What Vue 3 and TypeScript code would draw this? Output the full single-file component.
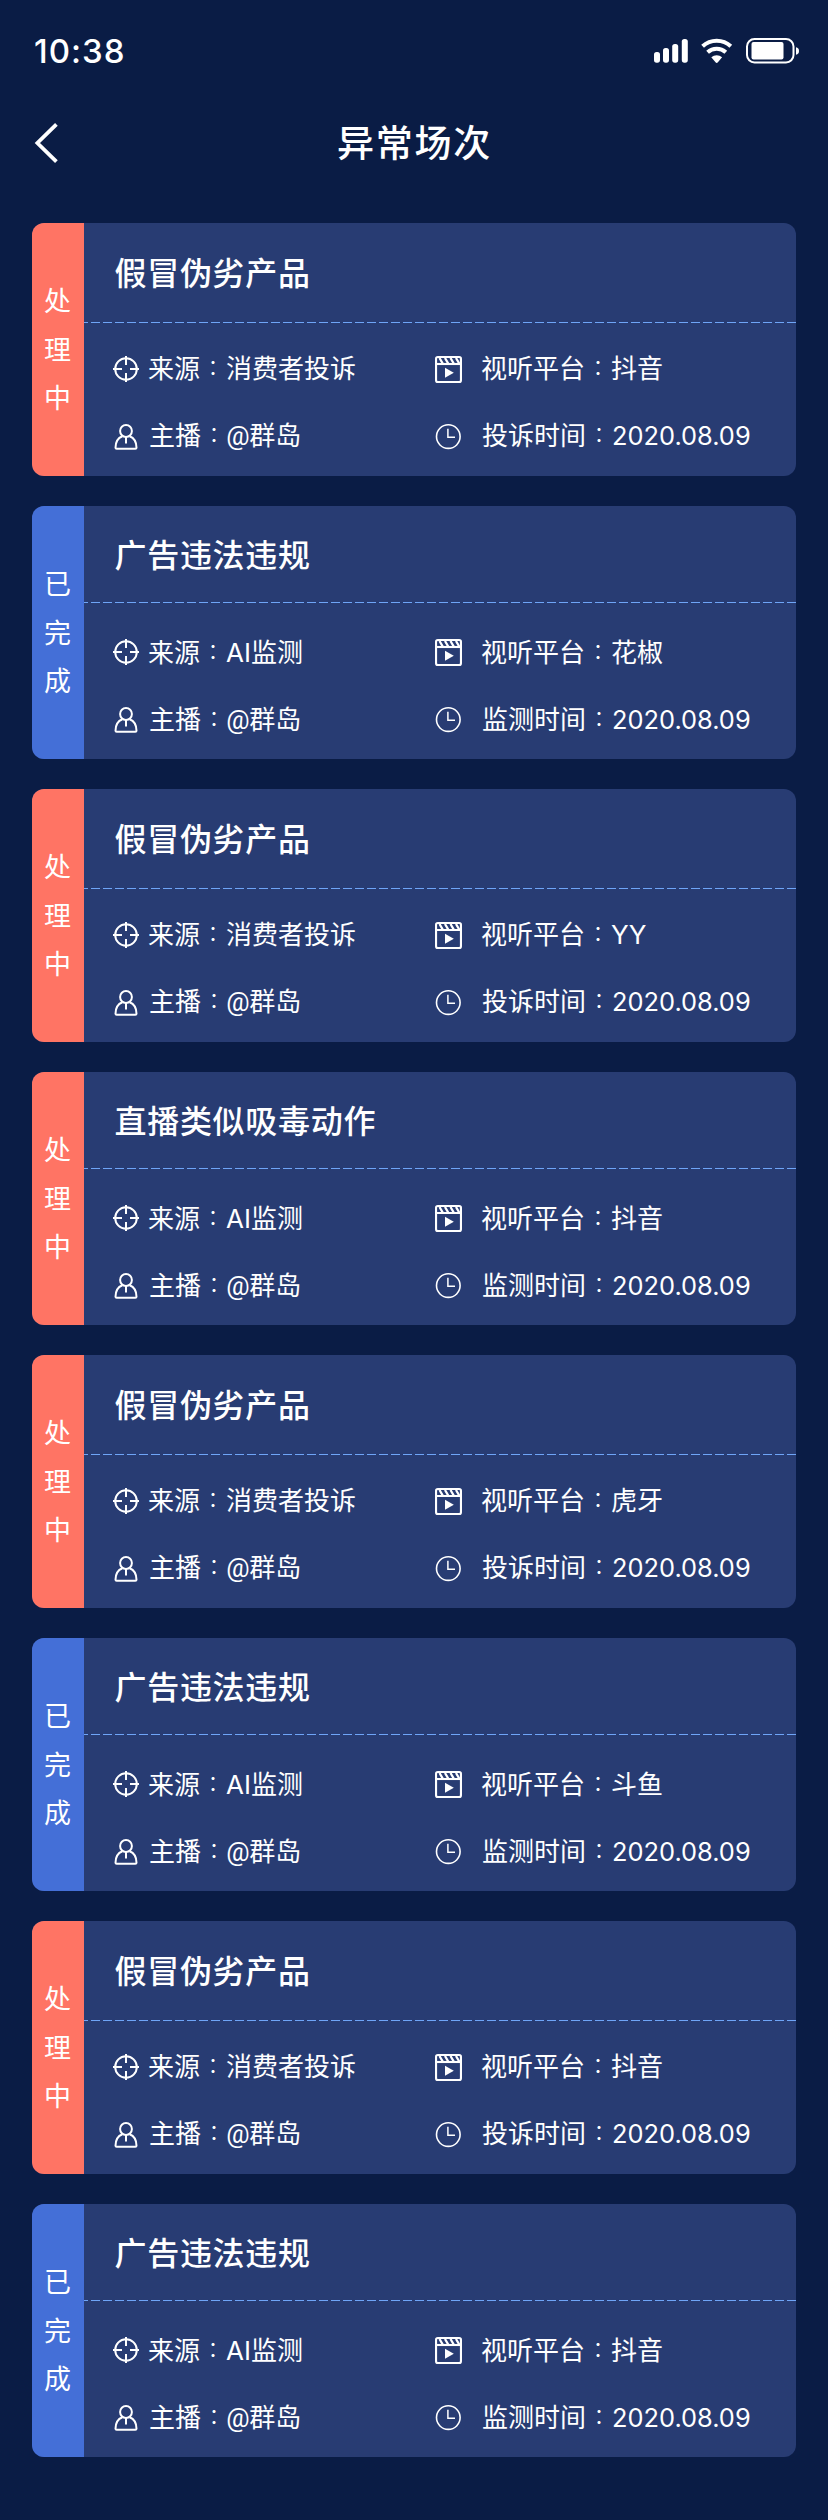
<script setup lang="ts">
type Status = 'processing' | 'done'

interface Session {
  status: Status
  title: string
  source: string
  platform: string
  timeLabel: string
}

const statusText: Record<Status, string[]> = {
  processing: ['处', '理', '中'],
  done: ['已', '完', '成'],
}

const complaint = (platform: string): Session => ({
  status: 'processing',
  title: '假冒伪劣产品',
  source: '消费者投诉',
  platform,
  timeLabel: '投诉时间',
})

const monitored = (status: Status, title: string, platform: string): Session => ({
  status,
  title,
  source: 'AI监测',
  platform,
  timeLabel: '监测时间',
})

const sessions: Session[] = [
  complaint('抖音'),
  monitored('done', '广告违法违规', '花椒'),
  complaint('YY'),
  monitored('processing', '直播类似吸毒动作', '抖音'),
  complaint('虎牙'),
  monitored('done', '广告违法违规', '斗鱼'),
  complaint('抖音'),
  monitored('done', '广告违法违规', '抖音'),
]
</script>

<template>
  <main class="screen">
    <div class="status-bar">
      <span class="clock">10:38</span>
      <svg class="indicators" width="146" height="28" viewBox="0 0 146 28" fill="#fff">
        <rect x="1" y="15" width="6" height="10.7" rx="2.6" />
        <rect x="10" y="11" width="6" height="14.7" rx="2.6" />
        <rect x="19.2" y="7" width="6" height="18.7" rx="2.6" />
        <rect x="28.8" y="2" width="6" height="23.7" rx="2.6" />
        <g fill="none" stroke="#fff" stroke-width="4">
          <path d="M49.6 9.3a20.5 20.5 0 0 1 28.2 0" />
          <path d="M54.6 15.3a13.5 13.5 0 0 1 18.2 0" />
        </g>
        <path d="M58.3 20.3a8.5 8.5 0 0 1 10.8 0l-4.2 4.9q-1.2 1.4-2.4 0z" />
        <rect x="94" y="2" width="46.5" height="23.5" rx="7.5" fill="none" stroke="#fff" stroke-width="2" />
        <rect x="98.5" y="5" width="32" height="17.6" rx="2" />
        <path d="M143 10.3q3 .5 3 3.7t-3 3.7z" />
      </svg>
    </div>

    <header class="nav">
      <svg class="back" width="26" height="42" viewBox="0 0 26 42" fill="none" stroke="#fff" stroke-width="3.8">
        <path d="M22.4 2.3 3.4 21l19 18.7" />
      </svg>
      <h1>异常场次</h1>
    </header>

    <section class="list">
      <article v-for="(s, i) in sessions" :key="i" class="card" :class="{ monitored: s.timeLabel === '监测时间' }">
        <div class="tag" :class="s.status">
          <span v-for="c in statusText[s.status]" :key="c">{{ c }}</span>
        </div>
        <div class="body">
          <h2>{{ s.title }}</h2>
          <svg class="divider" width="712" height="1" viewBox="0 0 712 1">
            <path d="M-5 .5H712" stroke="#6fa5f7" stroke-dasharray="9 3" />
          </svg>
          <div class="grid">
            <div class="item">
              <svg width="26" height="26" viewBox="0 0 26 26" fill="none" stroke="#fff" stroke-width="2">
                <circle cx="13" cy="13" r="10.8" />
                <path d="M13 0v9M13 17v9M0 13h9M17 13h9" />
              </svg>
              <p>来源<i>：</i>{{ s.source }}</p>
            </div>
            <div class="item">
              <svg width="27" height="27" viewBox="0 0 27 27" fill="none" stroke="#fff" stroke-width="2.1">
                <rect x="1.05" y="1.05" width="24.9" height="24.9" rx="1.8" />
                <path d="M1 8h25" />
                <path d="M4.5 2 8 8M10 2l3.5 6M15.5 2 19 8M21 2l3.5 6" stroke-width="2.3" />
                <path d="M10 11.7v10l8.8-5z" fill="#fff" stroke="none" />
              </svg>
              <p>视听平台<i>：</i>{{ s.platform }}</p>
            </div>
            <div class="item lower">
              <svg width="26" height="27" viewBox="0 0 26 27" fill="none" stroke="#fff" stroke-width="2">
                <ellipse cx="12.5" cy="7" rx="5.9" ry="6" />
                <path d="M8.9 12.2C4.200 14 2 18.300 2 23.800q0 1 1.200 1h18.600q1.200 0 1.200-1c0-5.500-2.200-9.800-6.900-11.600M12.500 13v6.600" />
              </svg>
              <p>主播<i>：</i><b>@</b>群岛</p>
            </div>
            <div class="item lower">
              <svg width="27" height="27" viewBox="0 0 27 27" fill="none" stroke="#fff">
                <circle cx="13.3" cy="12.6" r="11.8" stroke-width="1.6" />
                <path d="M12.9 4.8v8.4H20" stroke-width="1.5" />
              </svg>
              <p>{{ s.timeLabel }}<i>：</i><span class="date">2020.08.09</span></p>
            </div>
          </div>
        </div>
      </article>
    </section>
  </main>
</template>

<style>
body {
  margin: 0;
  background: #0a1c45;
}
</style>

<style scoped>
.screen {
  box-sizing: border-box;
  width: 828px;
  height: 2520px;
  background: #0a1c45;
  color: #fff;
  font-family: Inter, "Noto Sans CJK SC", sans-serif;
}
.status-bar {
  display: flex;
  align-items: flex-start;
  justify-content: space-between;
  height: 100px;
  padding: 37px 29px 0 34px;
  box-sizing: border-box;
}
.clock {
  font: 500 33px/28px Inter, sans-serif;
  letter-spacing: 1px;
}
.nav {
  position: relative;
  display: flex;
  justify-content: center;
  height: 123px;
}
.back {
  position: absolute;
  left: 34px;
  top: 22px;
}
h1 {
  margin: 13px 0 0;
  padding-left: 1px;
  font: 500 37px/56px "Noto Sans CJK SC", sans-serif;
  letter-spacing: 1.7px;
}
.list {
  display: flex;
  flex-direction: column;
  gap: 30px;
  padding: 0 32px;
}
.card {
  display: flex;
  height: 253px;
  border-radius: 12px;
  overflow: hidden;
  background: #283c73;
}
.tag {
  display: flex;
  flex: 0 0 52px;
  flex-direction: column;
  align-items: center;
  padding: 53px 1px 0 0;
  box-sizing: border-box;
  font: 400 27px/48.5px "Noto Sans CJK SC", sans-serif;
}
.processing {
  background: #ff7464;
}
.done {
  background: #446fd7;
}
.body {
  flex: 1;
}
h2 {
  box-sizing: border-box;
  height: 99px;
  margin: 0;
  padding: 24px 0 0 30.5px;
  font: 500 32px/48px "Noto Sans CJK SC", sans-serif;
  letter-spacing: 0.7px;
}
.monitored h2 {
  height: 96px;
  padding-top: 23px;
}
.divider {
  display: block;
}
.grid {
  display: grid;
  grid-template-columns: 322px 1fr;
  grid-template-rows: 67px 67px;
  padding: 33px 0 0 29px;
}
.monitored .grid {
  padding-top: 36px;
}
.item {
  display: flex;
}
.item svg {
  flex: none;
  width: 27px;
}
.item:nth-child(1) svg {
  width: 26px;
}
.item.lower svg {
  margin-top: 1px;
}
p {
  margin: -6px 0 0;
  padding-left: 9px;
  font-size: 26px;
  line-height: 38px;
  white-space: nowrap;
}
.monitored p {
  margin-top: -5px;
}
.item:nth-child(even) p {
  padding-left: 19px;
}
.item.lower:nth-child(even) p {
  padding-left: 20px;
}
p i {
  display: inline-block;
  width: 26px;
  font: normal 20px/1 "Noto Sans CJK TC", sans-serif;
  text-align: center;
  vertical-align: 2.5px;
}
p b {
  margin: 0 -0.5px 0 -0.7px;
  font: 400 26px/1 Roboto, sans-serif;
}
.date {
  font-size: 25.4px;
}
</style>
